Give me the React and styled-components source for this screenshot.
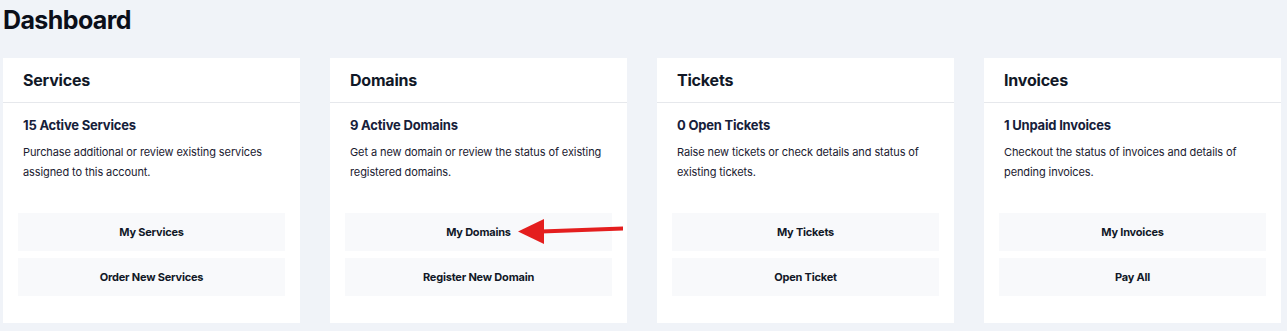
import React from 'react';
import styled, { createGlobalStyle } from 'styled-components';

const GlobalStyle = createGlobalStyle`
  body {
    margin: 0;
    background-color: #f0f3f8;
    font-family: Inter, "Liberation Sans", Arial, sans-serif;
    color: #111827;
  }
`;

const Page = styled.div`
  padding: 0 6px 7px 3px;
`;

const Heading = styled.h1`
  margin: 0;
  padding: 4px 0 0 0;
  height: 58px;
  box-sizing: border-box;
  font-size: 25px;
  line-height: 32px;
  font-weight: 700;
  letter-spacing: -0.6px;
  color: #0b0f1a;
`;

const Grid = styled.div`
  display: grid;
  grid-template-columns: repeat(4, 1fr);
  gap: 30px;
`;

const Card = styled.div`
  position: relative;
  background: #ffffff;
  display: flex;
  flex-direction: column;
`;

const CardHeader = styled.div`
  height: 45px;
  padding: 0 20px 1px;
  box-sizing: border-box;
  display: flex;
  align-items: center;
  border-bottom: 1px solid #e6e8ec;
  font-size: 16px;
  font-weight: 700;
  letter-spacing: -0.2px;
  color: #111827;
`;

const CardBody = styled.div`
  padding: 14px 15px 27px;
  display: flex;
  flex-direction: column;
`;

const Count = styled.div`
  padding: 0 5px;
  font-size: 13px;
  line-height: 16px;
  font-weight: 700;
  letter-spacing: -0.2px;
  color: #16203a;
`;

const Description = styled.p`
  margin: 9px 0 0;
  padding: 0 5px;
  height: 40px;
  font-size: 11px;
  line-height: 20px;
  letter-spacing: -0.1px;
  color: #1a2030;
`;

const Actions = styled.div`
  margin-top: 31px;
  display: flex;
  flex-direction: column;
  gap: 7px;
`;

const ActionButton = styled.button`
  height: 38px;
  padding: 0 0 1px;
  border: none;
  background: #f8f9fb;
  font-family: inherit;
  font-size: 11px;
  font-weight: 700;
  letter-spacing: -0.2px;
  color: #111827;
  cursor: pointer;
`;

const Arrow = styled.svg`
  position: absolute;
  left: 185px;
  top: 160px;
  pointer-events: none;
`;

const cards = [
  {
    title: 'Services',
    count: '15 Active Services',
    text: 'Purchase additional or review existing services assigned to this account.',
    actions: ['My Services', 'Order New Services'],
  },
  {
    title: 'Domains',
    count: '9 Active Domains',
    text: 'Get a new domain or review the status of existing registered domains.',
    actions: ['My Domains', 'Register New Domain'],
    arrow: true,
  },
  {
    title: 'Tickets',
    count: '0 Open Tickets',
    text: 'Raise new tickets or check details and status of existing tickets.',
    actions: ['My Tickets', 'Open Ticket'],
  },
  {
    title: 'Invoices',
    count: '1 Unpaid Invoices',
    text: 'Checkout the status of invoices and details of pending invoices.',
    actions: ['My Invoices', 'Pay All'],
  },
];

const App = () => (
  <>
    <GlobalStyle />
    <Page>
      <Heading>Dashboard</Heading>
      <Grid>
        {cards.map((card) => (
          <Card key={card.title}>
            <CardHeader>{card.title}</CardHeader>
            <CardBody>
              <Count>{card.count}</Count>
              <Description>{card.text}</Description>
              <Actions>
                {card.actions.map((a) => (
                  <ActionButton key={a}>{a}</ActionButton>
                ))}
              </Actions>
            </CardBody>
            {card.arrow && (
              <Arrow width="110" height="30" viewBox="0 0 110 30">
                <path d="M108 8.5 L26 11.5 L26 15.5 L108 12.5 Z" fill="#e41e1e" />
                <path d="M3 13.5 L29 1 L29 26 Z" fill="#e41e1e" />
              </Arrow>
            )}
          </Card>
        ))}
      </Grid>
    </Page>
  </>
);

export default App;
